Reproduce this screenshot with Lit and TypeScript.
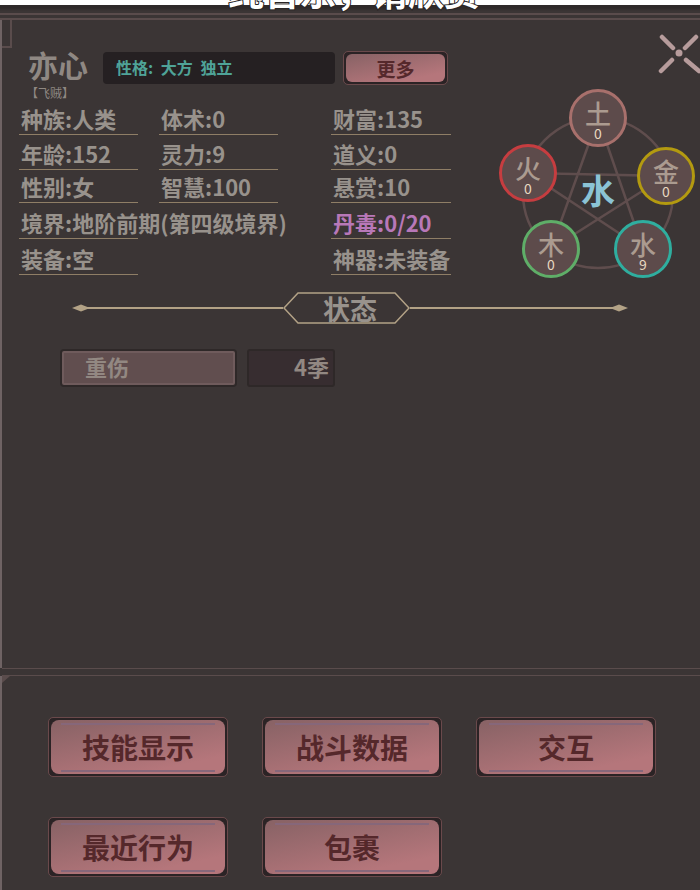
import { LitElement, html, css, svg } from "lit";
import { customElement } from "lit/decorators.js";

const stats: [string, string?][][] = [
  [["种族:人类"], ["体术:0"], ["财富:135"]],
  [["年龄:152"], ["灵力:9"], ["道义:0"]],
  [["性别:女"], ["智慧:100"], ["悬赏:10"]],
  [["境界:地阶前期(第四级境界)"], [""], ["丹毒:0/20", "poison"]],
  [["装备:空"], [""], ["神器:未装备"]],
];

const nodes = [
  { n: "土", v: "0", x: 108, y: 38, c: "#a8706c" },
  { n: "火", v: "0", x: 38, y: 93, c: "#c63d40" },
  { n: "金", v: "0", x: 176, y: 96, c: "#b39a10" },
  { n: "木", v: "0", x: 61, y: 169, c: "#5fae68" },
  { n: "水", v: "9", x: 153, y: 169, c: "#2fae9f" },
];

@customElement("app-root")
export class AppRoot extends LitElement {
  static styles = css`
    :host {
      display: block;
      position: relative;
      width: 700px;
      height: 890px;
      overflow: hidden;
      background: #3b3535;
      font-family: "Noto Sans CJK SC", "Noto Sans", sans-serif;
      color: #98928c;
    }
    .toast {
      position: absolute;
      left: 228px;
      top: -35px;
      font-size: 36px;
      font-weight: 700;
      line-height: 50px;
      color: #fff;
      white-space: nowrap;
      z-index: 3;
      -webkit-text-stroke: 2px #2a2526;
      paint-order: stroke fill;
    }
    .strip { height: 5px; background: #fff; }
    .topbar {
      height: 15px;
      box-sizing: border-box;
      background: linear-gradient(#2e2929 0 3px, #3b3535 6px);
      display: flex;
      flex-direction: column;
      justify-content: flex-end;
    }
    .topbar i { display: block; height: 2px; background: #5a4c4c; margin-bottom: 3px; }
    .topbar i:last-child { margin-bottom: 0; }
    .main {
      position: relative;
      height: 648px;
      box-sizing: border-box;
      border-left: 2px solid #6f6364;
      padding-top: 32px;
    }
    .tab {
      position: absolute;
      left: 0;
      top: 0;
      width: 8px;
      height: 26px;
      border: solid #5a4c4c;
      border-width: 0 2px 2px 0;
    }
    .top { display: flex; }
    .left { width: 488px; flex: none; }
    .head { display: flex; height: 48px; padding-left: 26px; }
    .name { width: 75px; flex: none; }
    .name b {
      display: block;
      font-size: 30px;
      line-height: 32px;
      margin-top: -4px;
      font-weight: 700;
      color: #8f8883;
    }
    .name small {
      display: block;
      font-size: 12px;
      line-height: 14px;
      margin-top: 6px;
      margin-left: -2px;
      color: #8f8883;
    }
    .trait {
      width: 232px;
      height: 32px;
      flex: none;
      box-sizing: border-box;
      padding-left: 13px;
      background: #252022;
      border-radius: 4px;
      color: #4fa398;
      font-size: 16px;
      font-weight: 700;
      line-height: 31px;
      white-space: pre;
      word-spacing: 4px;
    }
    .pink {
      box-sizing: border-box;
      padding: 2px;
      background: #2b2325;
      outline: 1px solid #6a494b;
      border-radius: 4px;
      color: #55282b;
      font-weight: 700;
      display: flex;
    }
    .pink span {
      position: relative;
      flex: 1;
      display: flex;
      align-items: center;
      justify-content: center;
      border-radius: 6px;
      background: linear-gradient(168deg, #8a6366 5%, #b5767b 80%);
    }
    .more {
      width: 103px;
      height: 32px;
      margin-left: 9px;
      font-size: 19px;
    }
    .stats {
      display: grid;
      margin-left: 17px;
      width: 432px;
      grid-template-columns: 140px 172px 120px;
      grid-template-rows: 35px 35px 33px 36px 36px;
    }
    .cell { min-width: 0; }
    .cell span {
      display: flex;
      align-items: flex-end;
      width: 119px;
      height: 100%;
      box-sizing: border-box;
      padding-left: 2px;
      border-bottom: 1px solid #8f7e66;
      font-size: 22px;
      line-height: 31px;
      font-weight: 700;
      white-space: nowrap;
    }
    .cell:nth-child(3n) span { width: 120px; }
    .cell span.empty { border-bottom-color: transparent; }
    .cell span.poison { color: #b878b8; }
    .wheel { position: relative; width: 210px; height: 210px; margin-top: 28px; flex: none; }
    .wheel svg { position: absolute; left: 0; top: 0; }
    .core {
      position: absolute;
      left: 88px;
      top: 90px;
      width: 40px;
      text-align: center;
      font-size: 34px;
      line-height: 40px;
      font-weight: 700;
      color: #8bc3d5;
    }
    .node {
      position: absolute;
      width: 58px;
      height: 58px;
      margin: -29px 0 0 -29px;
      box-sizing: border-box;
      border-radius: 50%;
      border: 3px solid;
      background: #5d4b4b;
      display: flex;
      flex-direction: column;
      align-items: center;
      color: #ab9b90;
    }
    .node b { font-size: 26px; line-height: 26px; margin-top: 8px; font-weight: 500; }
    .node small { font-size: 14px; line-height: 15px; color: #e8d8c0; }
    .close { position: absolute; left: 654px; top: 13px; filter: blur(0.4px); }
    .divider {
      display: flex;
      align-items: center;
      width: 556px;
      height: 32px;
      margin: 2px 0 0 70px;
    }
    .divider svg.rule { flex: none; height: 12px; }
    .badge {
      position: relative;
      width: 127px;
      height: 32px;
      flex: none;
      box-sizing: border-box;
      padding-left: 7px;
      text-align: center;
      font-size: 27px;
      line-height: 33px;
      font-weight: 700;
    }
    .badge svg { position: absolute; left: 0; top: 0; }
    .badge span { position: relative; }
    .status { display: flex; align-items: center; gap: 12px; margin: 25px 0 0 58px; height: 38px; }
    .st-name {
      width: 173px;
      height: 34px;
      box-sizing: border-box;
      padding-left: 21px;
      background: #614e4f;
      border: 2px solid #6f5b5c;
      box-shadow: 0 0 0 2px #2e2828;
      border-radius: 2px;
      font-size: 22px;
      line-height: 27px;
      font-weight: 700;
      color: #928882;
      margin-left: 2px;
    }
    .st-time {
      width: 88px;
      height: 38px;
      box-sizing: border-box;
      padding-right: 4px;
      text-align: right;
      background: #372d30;
      border: 2px solid #2e2828;
      border-radius: 3px;
      font-size: 22px;
      line-height: 31px;
      font-weight: 700;
      color: #928882;
    }
    .split {
      height: 6px;
      border-top: 1px solid #5a4c4c;
      border-bottom: 1px solid #5a4c4c;
      margin-left: 2px;
    }
    .bottom {
      position: relative;
      height: 214px;
      box-sizing: border-box;
      border-left: 2px solid #6f6364;
      padding: 41px 0 0 46px;
      display: grid;
      grid-template-columns: repeat(3, 180px);
      grid-auto-rows: 60px;
      column-gap: 34px;
      row-gap: 40px;
    }
    .notch { position: absolute; left: 0; top: 0; }
    .bottom .pink {
      margin: 1px;
      font-size: 28px;
    }
    .bottom .pink span { border-radius: 8px; }
    .bottom .pink span::before,
    .bottom .pink span::after {
      content: "";
      position: absolute;
      left: 10px;
      right: 10px;
      height: 2px;
      background: #86677a;
    }
    .bottom .pink span::before { top: 3px; }
    .bottom .pink span::after { bottom: 2px; }
  `;

  render() {
    const pts: [number, number][] = nodes.map((n) => [n.x, n.y]);
    const order = [0, 3, 2, 1, 4, 0];
    const star = order.map((i) => pts[i].join(",")).join(" ");
    return html`
      <div class="toast">纯音乐，请欣赏</div>
      <div class="strip"></div>
      <div class="topbar"><i></i><i></i></div>
      <div class="main">
        <div class="tab"></div>
        <div class="top">
          <div class="left">
            <div class="head">
              <div class="name"><b>亦心</b><small>【飞贼】</small></div>
              <div class="trait">性格: 大方 独立</div>
              <div class="pink more"><span>更多</span></div>
            </div>
            <div class="stats">
              ${stats.flat().map(
                ([t, c]) => html`<div class="cell"><span class="${c ?? (t ? "" : "empty")}">${t}</span></div>`
              )}
            </div>
          </div>
          <div class="wheel">
            <svg width="210" height="210" viewBox="0 0 210 210" fill="none" stroke="#5f4d4d" stroke-width="2.5">
              <circle cx="108" cy="113" r="75"></circle>
              <polyline points="${star}"></polyline>
            </svg>
            <div class="core">水</div>
            ${nodes.map(
              (n) => html`<div class="node" style="left:${n.x}px;top:${n.y}px;border-color:${n.c}">
                <b>${n.n}</b><small>${n.v}</small>
              </div>`
            )}
          </div>
          <svg class="close" width="46" height="44" viewBox="0 0 46 44" stroke="#b79c9c" stroke-width="4.5" stroke-linecap="round">
            ${svg`<path d="M6 4 L17 15 M40 4 L29 15 M16 27 L5 38 M30 27 L43 38"></path><circle cx="23" cy="20" r="3.5" fill="#b79c9c" stroke="none"></circle>`}
          </svg>
        </div>
        <div class="divider">
          <svg class="rule" width="211" height="12" viewBox="0 0 211 12">
            <path d="M0 6 L9 2.5 L18 6 L9 9.5 Z" fill="#b3a286"></path>
            <rect x="12" y="5" width="199" height="2" fill="#b3a286"></rect>
          </svg>
          <div class="badge">
            <svg width="127" height="32" viewBox="0 0 127 32" fill="#3b3535" stroke="#b3a286" stroke-width="1.5">
              <path d="M1 16 L15 1 H112 L126 16 L112 31 H15 Z"></path>
            </svg>
            <span>状态</span>
          </div>
          <svg class="rule" width="218" height="12" viewBox="0 0 218 12">
            <rect x="0" y="5" width="206" height="2" fill="#b3a286"></rect>
            <path d="M200 6 L209 2.5 L218 6 L209 9.5 Z" fill="#b3a286"></path>
          </svg>
        </div>
        <div class="status">
          <div class="st-name">重伤</div>
          <div class="st-time">4季</div>
        </div>
      </div>
      <div class="split"></div>
      <div class="bottom">
        <svg class="notch" width="8" height="8" viewBox="0 0 8 8"><path d="M0 0 H8 L0 7 Z" fill="#5a4c4c"></path></svg>
        <div class="pink"><span>技能显示</span></div>
        <div class="pink"><span>战斗数据</span></div>
        <div class="pink"><span>交互</span></div>
        <div class="pink"><span>最近行为</span></div>
        <div class="pink"><span>包裹</span></div>
      </div>
    `;
  }
}
